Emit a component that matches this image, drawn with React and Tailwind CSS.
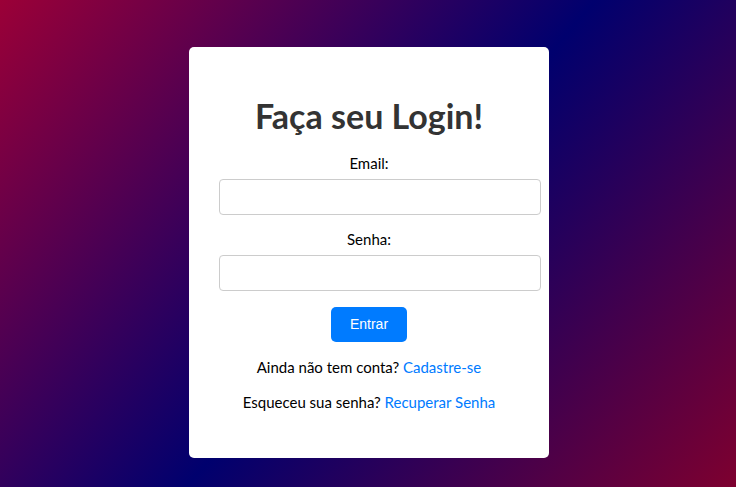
export default function App() {
  return (
    <div className="min-h-[487px] w-full flex justify-center items-start pt-[47px] pl-[2px] bg-[linear-gradient(130deg,#9b0037_0%,#00006e_52%,#7e002f_100%)] font-['Lato','Noto_Sans',sans-serif]">
      <div className="w-[360px] bg-white rounded-[5px] px-[30px] pt-[50px] pb-[46px] text-black">
        <h1 className="text-center text-[34px] leading-[38px] font-bold text-[#333]">Faça seu Login!</h1>

        <form className="mt-[19px]" onSubmit={(e) => e.preventDefault()}>
          <label className="block text-center text-[15px] leading-[19px]">Email:</label>
          <input
            type="email"
            className="block mt-[6px] w-[322px] h-[36px] border border-[#ccc] rounded-[4px] px-[10px] outline-none"
          />

          <label className="block mt-[15px] text-center text-[15px] leading-[19px]">Senha:</label>
          <input
            type="password"
            className="block mt-[6px] w-[322px] h-[36px] border border-[#ccc] rounded-[4px] px-[10px] outline-none"
          />

          <div className="flex justify-center mt-4">
            <button
              type="submit"
              className="h-[35px] px-[19px] bg-[#007bff] text-white rounded-[5px] text-[14px] font-['Liberation_Sans',Arial,sans-serif]"
            >
              Entrar
            </button>
          </div>
        </form>

        <p className="mt-4 text-center text-[15px] leading-[19px]">
          Ainda não tem conta? <a href="#" className="text-[#007bff]">Cadastre-se</a>
        </p>
        <p className="mt-4 text-center text-[15px] leading-[19px]">
          Esqueceu sua senha? <a href="#" className="text-[#007bff]">Recuperar Senha</a>
        </p>
      </div>
    </div>
  )
}
